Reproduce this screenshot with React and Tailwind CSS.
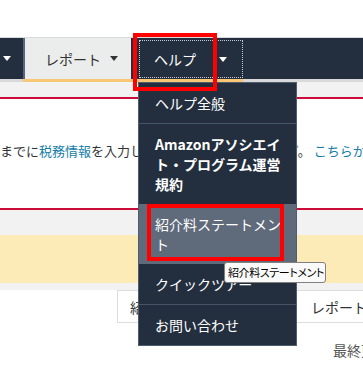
import React from 'react'

const Caret = ({ color = 'border-t-white' }) => (
  <span className={`inline-block w-0 h-0 border-x-[4px] border-x-transparent border-t-[5px] ${color}`} />
)

const menu = [
  { label: 'ヘルプ全般' },
  { label: 'Amazonアソシエイト・プログラム運営規約', bold: true },
  { label: '紹介料ステートメント', active: true },
  { label: 'クイックツアー' },
  { label: 'お問い合わせ' },
]

export default function App() {
  return (
    <div className="relative w-[363px] h-[365px] overflow-hidden bg-white font-['Noto_Sans_CJK_JP','Noto_Sans',sans-serif] text-[14px] text-[#333]">
      <div className="h-[37px]" />

      {/* nav */}
      <div className="flex h-[45px] border-t border-[#d9d9d9]">
        <div className="w-[23px] flex flex-col">
          <div className="flex-1 bg-[#232f3e] flex items-center pl-[3px]"><Caret /></div>
          <div className="h-[3px] bg-[#d9d9d9]" />
        </div>
        <div className="w-[2px] flex flex-col">
          <div className="flex-1 bg-[#56677d]" />
          <div className="h-[3px] bg-[#f8c675]" />
        </div>
        <div className="w-[106px] flex flex-col">
          <div className="flex-1 bg-[#ebeded] flex items-center pl-[20px] gap-[9px] leading-[20px]">
            <span>レポート</span>
            <Caret color="border-t-[#333]" />
          </div>
          <div className="h-[3px] bg-[#f8c675]" />
        </div>
        <div className="w-[112px] flex flex-col">
          <div className="flex-1 bg-[#232f3e] pl-[8px] pt-[2px] pb-[1px]">
            <div className="h-full border border-dotted border-[#c8ccd2] flex items-center pl-[14px] text-white leading-[20px]">
              <span>ヘルプ</span>
              <span className="ml-[23px] flex"><Caret /></span>
            </div>
          </div>
          <div className="h-[3px] bg-[#f8c675]" />
        </div>
        <div className="flex-1 flex flex-col">
          <div className="flex-1 bg-[#232f3e]" />
          <div className="h-[3px] bg-[#d9d9d9]" />
        </div>
      </div>

      <div className="h-[15px] bg-[#f2f2f2]" />
      <div className="h-[2px] bg-[#cc0c39]" />

      <div className="h-[109px] pt-[42px] overflow-hidden whitespace-nowrap text-[13px] leading-[20px]">
        までに<span className="text-[#167ea8]">税務情報</span>を入力してください。詳細はヘルプ。 <span className="text-[#167ea8]">こちらから</span>
      </div>
      <div className="h-[2px] bg-[#cc0c39]" />
      <div className="h-[25px] bg-[#f2f2f2]" />
      <div className="h-[48px] bg-[#fdebb7]" />
      <div className="h-[7px] bg-[#f2f2f2]" />

      <div className="ml-[117px] h-[33px] flex overflow-hidden border-l border-t border-b border-[#dddddd] leading-[20px] whitespace-nowrap">
        <div className="w-[193px] shrink-0 pl-[12px] flex items-center">紹介料ステートメント</div>
        <div className="flex items-center">レポートをダウンロード</div>
      </div>
      <div className="mt-[17px] ml-[333px] whitespace-nowrap overflow-hidden text-[#555] leading-[20px]">最終更新日</div>

      {/* dropdown */}
      <div className="absolute left-[138px] top-[82px] w-[159px] bg-[#232f3e] border border-[#4f5d70] text-white">
        {menu.map((m, i) => (
          <div
            key={m.label}
            className={`pl-[16px] pr-[12px] py-[10px] leading-[20px] ${m.bold ? 'font-semibold' : ''} ${m.active ? 'bg-[#5f6a7b]' : ''} ${i === 0 || i === 3 ? 'border-b border-[#46546a]' : ''}`}
          >
            {m.label}
          </div>
        ))}
      </div>

      {/* annotations */}
      <div className="absolute left-[133px] top-[33px] w-[84px] h-[58px] border-[4px] border-[#ff0000]" />
      <div className="absolute left-[147px] top-[204px] w-[137px] h-[57px] border-[4px] border-[#ff0000]" />

      {/* tooltip */}
      <div className="absolute left-[224px] top-[262px] w-[102px] h-[21px] bg-[#fafafa] border border-[#808080] rounded-[3px] flex items-center pl-[3px] text-[11px] tracking-[-0.4px] text-black whitespace-nowrap overflow-hidden [font-feature-settings:'palt']">
        紹介料ステートメント
      </div>
    </div>
  )
}
